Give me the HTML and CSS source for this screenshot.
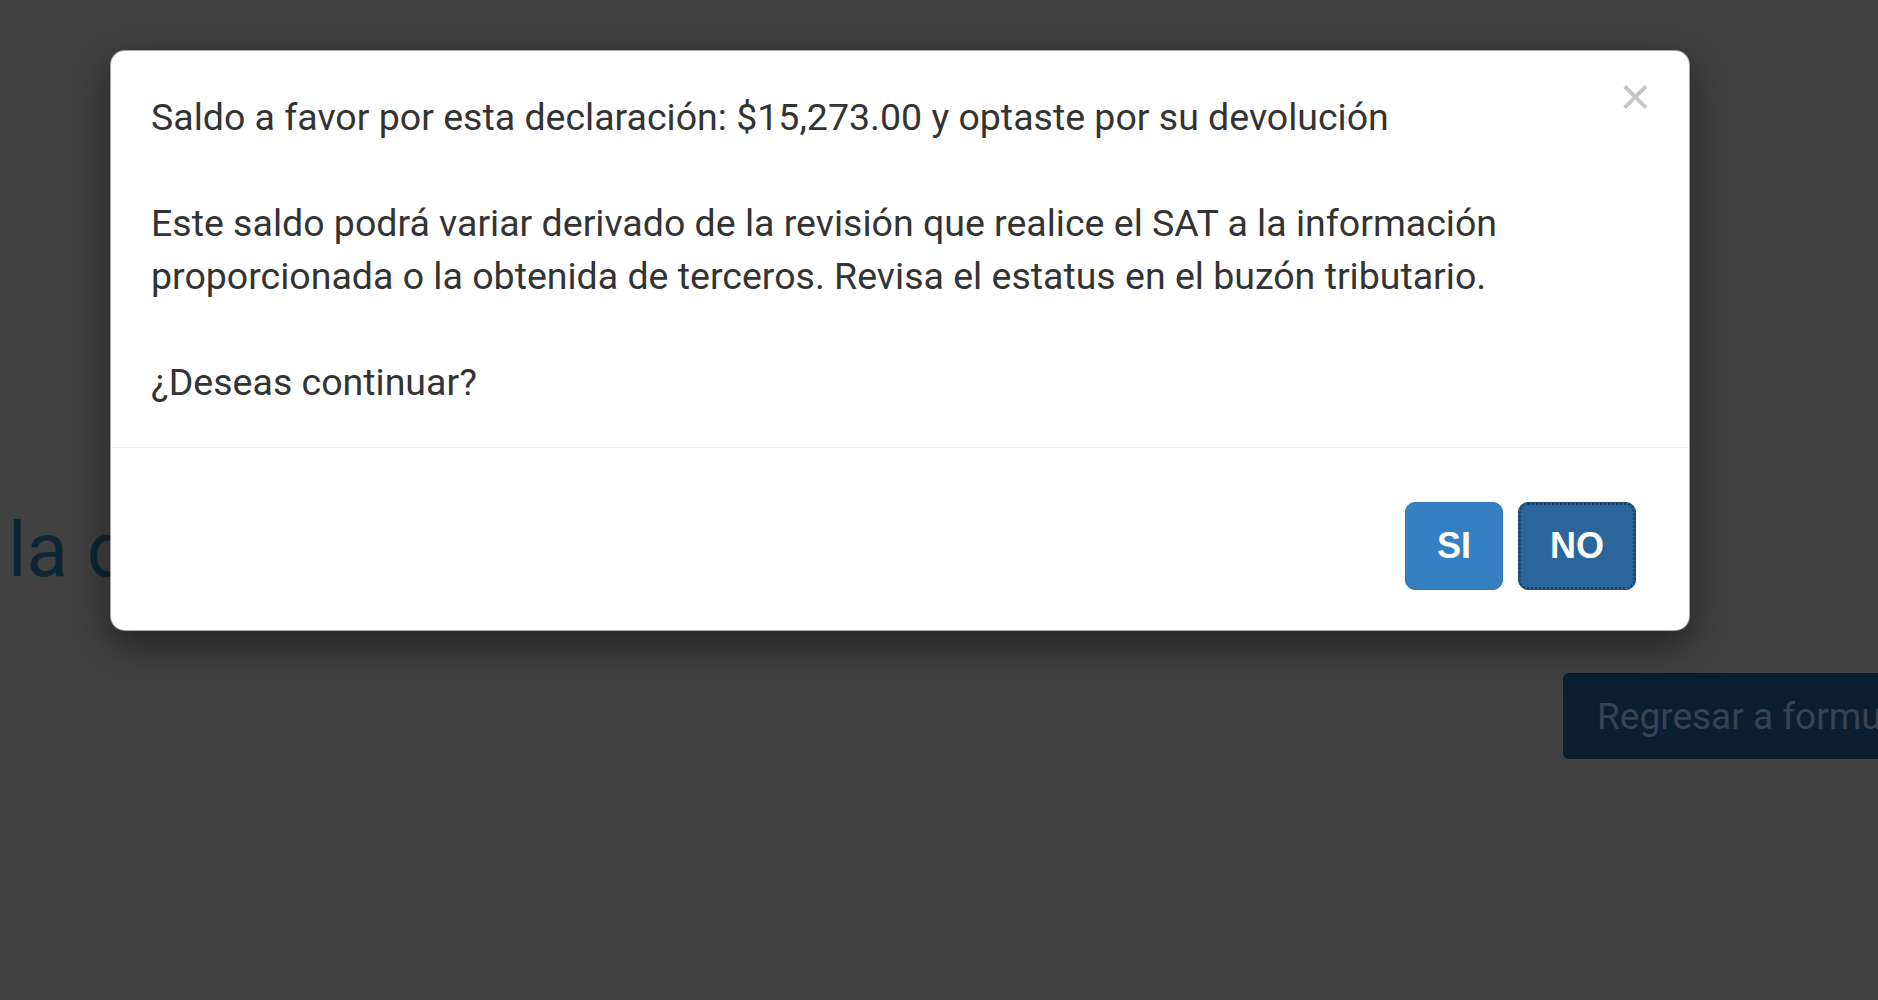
FILE: index.html
```html
<!DOCTYPE html>
<html lang="es">
<head>
<meta charset="utf-8">
<title>Confirmación</title>
<link rel="stylesheet" href="styles.css">
</head>
<body>
<div class="page">
  <h1 class="title">la declaración</h1>
  <div class="actions">
    <button class="btn-back" type="button">Regresar a formu</button>
  </div>
</div>

<div class="overlay">
  <div class="modal">
    <button class="close" type="button" aria-label="Cerrar">×</button>
    <div class="modal-body">
      <p>Saldo a favor por esta declaración: $15,273.00 y optaste por su devolución</p>
      <p>Este saldo podrá variar derivado de la revisión que realice el SAT a la información proporcionada o la obtenida de terceros. Revisa el estatus en el buzón tributario.</p>
      <p>¿Deseas continuar?</p>
    </div>
    <div class="modal-footer">
      <button class="btn btn-si" type="button">SI</button>
      <button class="btn btn-no" type="button">NO</button>
    </div>
  </div>
</div>
</body>
</html>
```

FILE: styles.css
```css
html, body {
  margin: 0;
  padding: 0;
}

body {
  width: 1878px;
  height: 1000px;
  overflow: hidden;
  background: #414141;
  font-family: Roboto, "Liberation Sans", sans-serif;
  position: relative;
}

.page {
  padding-top: 508px;
}

.title {
  margin: 0 0 0 8px;
  font-family: Roboto, "Liberation Sans", sans-serif;
  font-weight: 400;
  font-size: 76px;
  line-height: 84px;
  color: #0c2733;
  white-space: nowrap;
}

.actions {
  padding-left: 1563px;
  margin-top: 81px;
}

.btn-back {
  height: 86px;
  width: 330px;
  padding: 0 0 0 34px;
  border: 0;
  border-radius: 6px 0 0 6px;
  background: #0b1f31;
  color: #37434f;
  font-family: Roboto, "Liberation Sans", sans-serif;
  font-size: 37px;
  text-align: left;
  white-space: nowrap;
}

.overlay {
  position: absolute;
  inset: 0;
  padding: 50px 0 0 110px;
}

.modal {
  position: relative;
  width: 1578px;
  background: #fff;
  border: 1px solid rgba(0, 0, 0, 0.35);
  border-radius: 15px;
  box-shadow: 0 13px 40px rgba(0, 0, 0, 0.5);
}

.close {
  position: absolute;
  top: 18px;
  right: 38px;
  padding: 0;
  border: 0;
  background: transparent;
  font-family: "Liberation Sans", Arial, sans-serif;
  font-weight: 400;
  font-size: 54px;
  line-height: 1;
  color: #c6c6c6;
}

.modal-body {
  padding: 40px 40px 38px 40px;
  font-size: 37.5px;
  line-height: 53px;
  color: #333;
}

.modal-body p {
  margin: 0 0 53px 0;
}

.modal-body p:last-child {
  margin-bottom: 0;
}

.modal-footer {
  display: flex;
  justify-content: flex-end;
  gap: 15px;
  padding: 54px 53px 40px;
  border-top: 1px solid #ececec;
}

.btn {
  height: 88px;
  padding: 0 31px;
  border-radius: 10px;
  color: #fff;
  font-family: "Liberation Sans", Arial, sans-serif;
  font-weight: 700;
  font-size: 36px;
  line-height: 1;
}

.btn-si {
  background: #3580c0;
  border: 1px solid #2f74b0;
}

.btn-no {
  background: #2a669b;
  border: 1px solid #1f4f7a;
  outline: 2px dotted #1c3e60;
  outline-offset: -3px;
}
```
